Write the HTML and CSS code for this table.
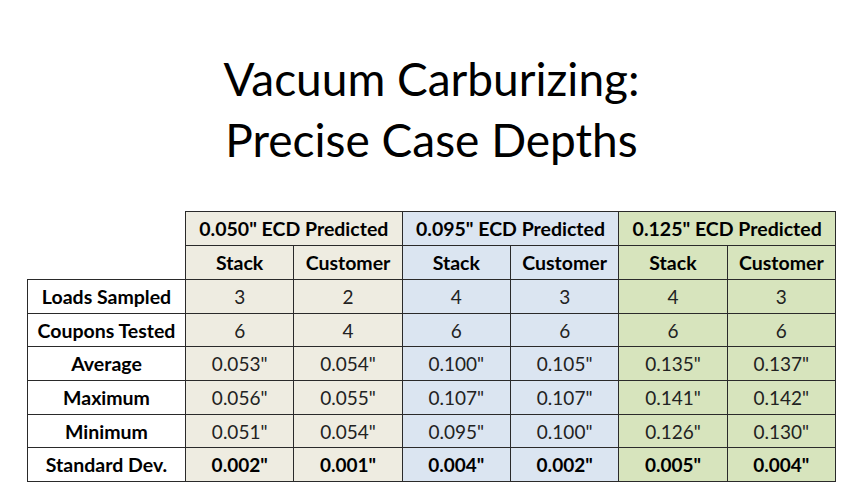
FILE: index.html
```html
<!DOCTYPE html>
<html lang="en">
<head>
<meta charset="utf-8">
<title>Vacuum Carburizing: Precise Case Depths</title>
<link rel="stylesheet" href="styles.css">
</head>
<body>
<div class="slide">
  <h1 class="title">Vacuum Carburizing:<br>Precise Case Depths</h1>
  <table class="data">
    <colgroup>
      <col class="c-label">
      <col class="c-val"><col class="c-val">
      <col class="c-val"><col class="c-val">
      <col class="c-val"><col class="c-val">
    </colgroup>
    <thead>
      <tr class="hrow">
        <th class="blank"></th>
        <th colspan="2" class="tan">0.050" ECD Predicted</th>
        <th colspan="2" class="blue">0.095" ECD Predicted</th>
        <th colspan="2" class="green">0.125" ECD Predicted</th>
      </tr>
      <tr class="hrow">
        <th class="blank"></th>
        <th class="tan">Stack</th><th class="tan">Customer</th>
        <th class="blue">Stack</th><th class="blue">Customer</th>
        <th class="green">Stack</th><th class="green">Customer</th>
      </tr>
    </thead>
    <tbody>
      <tr>
        <th>Loads Sampled</th>
        <td class="tan">3</td><td class="tan">2</td>
        <td class="blue">4</td><td class="blue">3</td>
        <td class="green">4</td><td class="green">3</td>
      </tr>
      <tr>
        <th>Coupons Tested</th>
        <td class="tan">6</td><td class="tan">4</td>
        <td class="blue">6</td><td class="blue">6</td>
        <td class="green">6</td><td class="green">6</td>
      </tr>
      <tr>
        <th>Average</th>
        <td class="tan">0.053"</td><td class="tan">0.054"</td>
        <td class="blue">0.100"</td><td class="blue">0.105"</td>
        <td class="green">0.135"</td><td class="green">0.137"</td>
      </tr>
      <tr>
        <th>Maximum</th>
        <td class="tan">0.056"</td><td class="tan">0.055"</td>
        <td class="blue">0.107"</td><td class="blue">0.107"</td>
        <td class="green">0.141"</td><td class="green">0.142"</td>
      </tr>
      <tr>
        <th>Minimum</th>
        <td class="tan">0.051"</td><td class="tan">0.054"</td>
        <td class="blue">0.095"</td><td class="blue">0.100"</td>
        <td class="green">0.126"</td><td class="green">0.130"</td>
      </tr>
      <tr class="strong">
        <th>Standard Dev.</th>
        <td class="tan">0.002"</td><td class="tan">0.001"</td>
        <td class="blue">0.004"</td><td class="blue">0.002"</td>
        <td class="green">0.005"</td><td class="green">0.004"</td>
      </tr>
    </tbody>
  </table>
</div>
</body>
</html>
```

FILE: styles.css
```css
html, body {
  margin: 0;
  padding: 0;
  background: #ffffff;
}

.slide {
  width: 850px;
  height: 497px;
  padding-top: 48px;
  box-sizing: border-box;
  font-family: Lato, "Open Sans", "Liberation Sans", sans-serif;
  color: #000;
}

.title {
  margin: 0 0 41px 0;
  padding-left: 13px;
  font-size: 46px;
  font-weight: 400;
  line-height: 61px;
  text-align: center;
  letter-spacing: 0;
}

.data {
  margin-left: 27px;
  border-collapse: collapse;
  table-layout: fixed;
  width: 809px;
}

.c-label { width: 158px; }
.c-val { width: 108.33px; }

.data th,
.data td {
  border: 1px solid #2a2a2a;
  padding: 0;
  text-align: center;
  vertical-align: middle;
  font-size: 19.5px;
  white-space: nowrap;
}

.data th {
  font-weight: 700;
}

.data td {
  font-size: 19px;
  font-weight: 400;
  color: #222;
}

.data th.blank {
  border: none;
  background: transparent;
}

.hrow { height: 34px; }
.data tbody tr { height: 33.7px; }

.data .strong td {
  font-weight: 700;
  color: #000;
}

.tan { background: #eeece1; }
.blue { background: #dbe5f1; }
.green { background: #d7e4bd; }
```
